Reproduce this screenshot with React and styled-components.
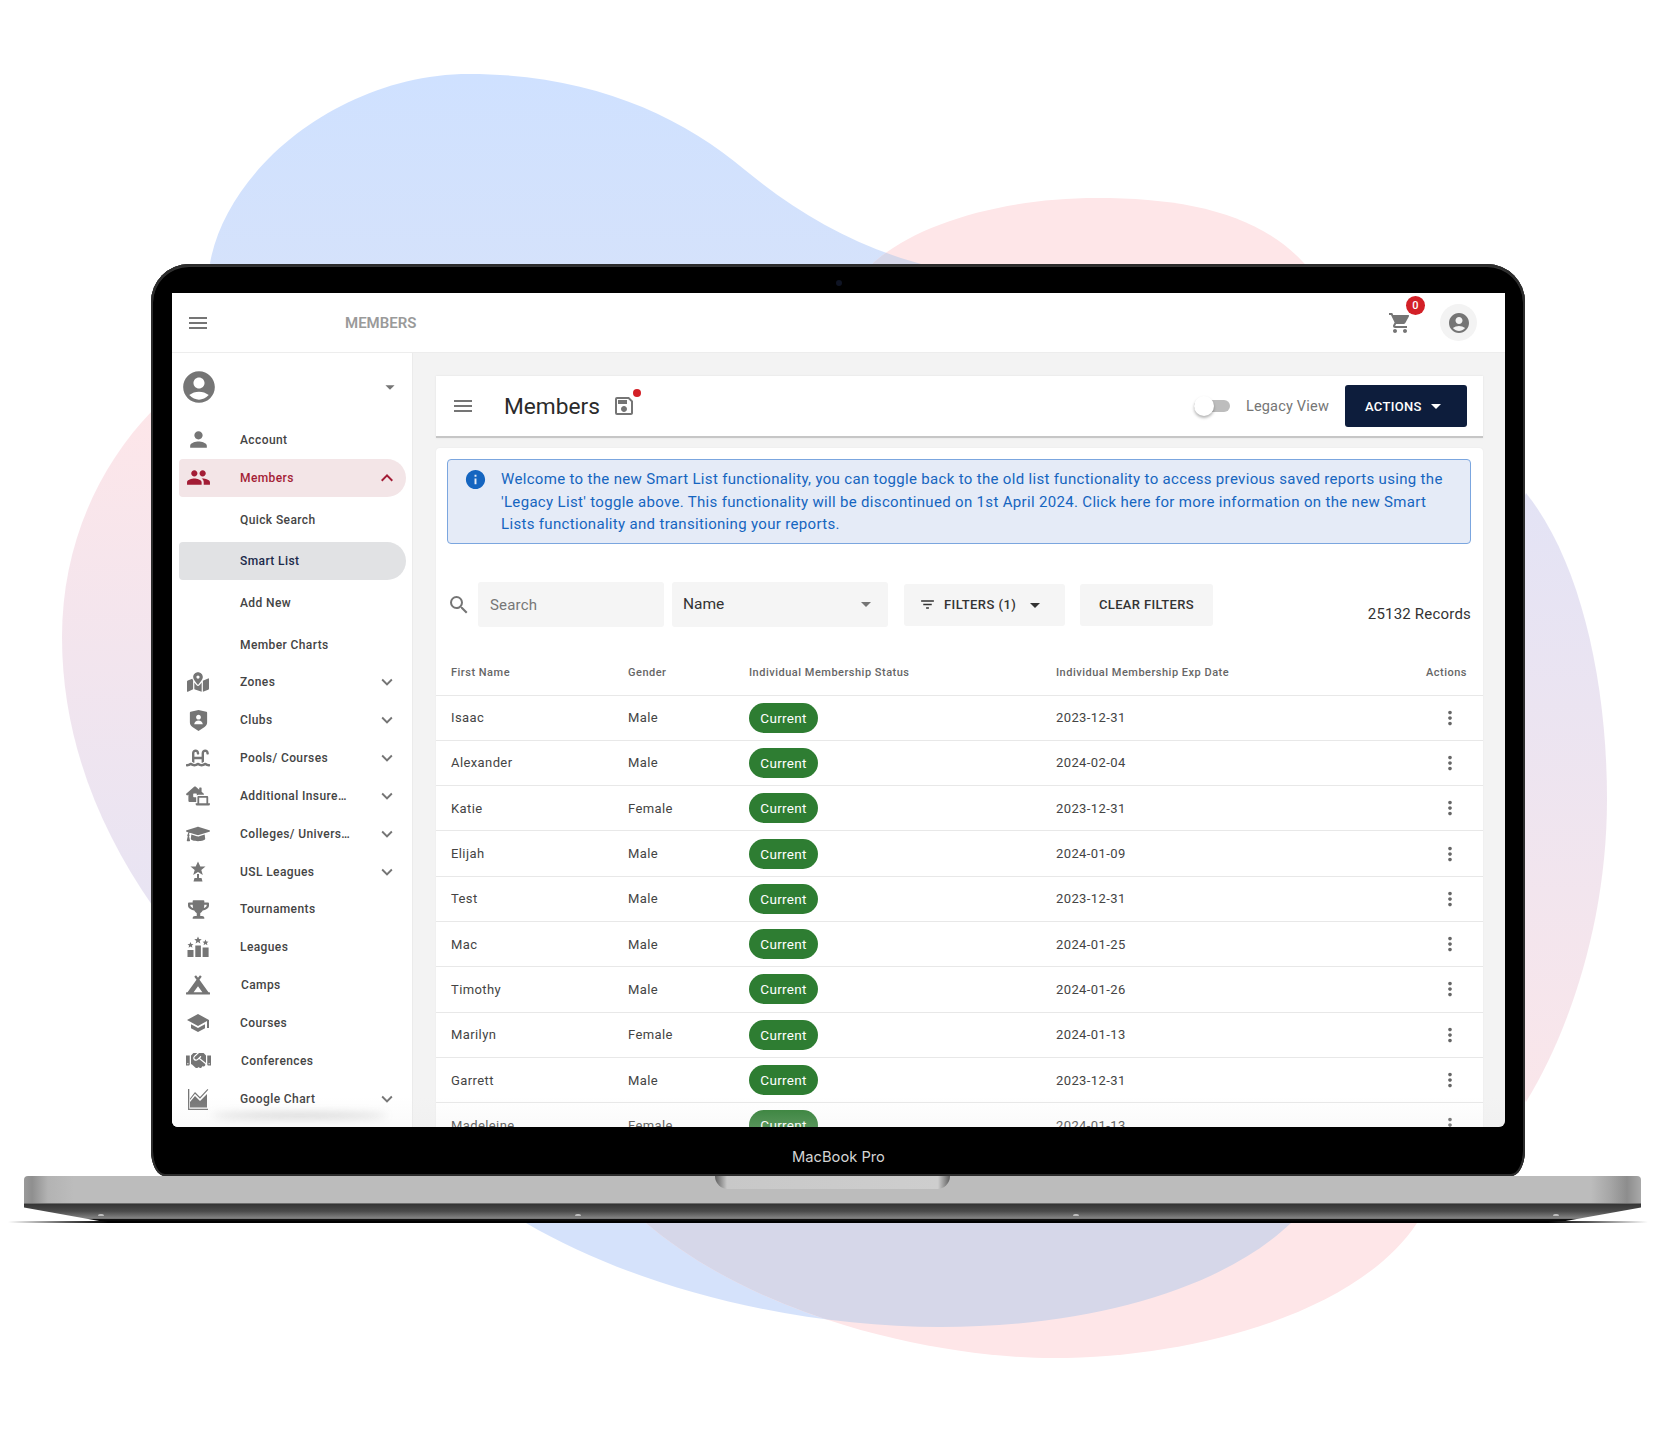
import React from "react";
import styled, { createGlobalStyle } from "styled-components";
import {
    MdMenu,
    MdShoppingCart,
    MdAccountCircle,
    MdPerson,
    MdPeople,
    MdKeyboardArrowDown,
    MdKeyboardArrowUp,
    MdArrowDropDown,
    MdSearch,
    MdFilterList,
    MdMoreVert,
    MdInfo,
    MdOutlineSave,
    MdSchool,
} from "react-icons/md";
import {
    FaMapMarkedAlt,
    FaSwimmingPool,
    FaLaptopHouse,
    FaGraduationCap,
    FaTrophy,
    FaCampground,
    FaHandshake,
} from "react-icons/fa";
import { RiShieldUserFill } from "react-icons/ri";

const UslIcon = () => (
    <svg width="24" height="24" viewBox="0 0 24 24" fill="currentColor">
        <path d="M12 1.5l2.3 5h5.2l-4.2 3.4 1.5 5-4.8-3-4.8 3 1.5-5-4.2-3.4h5.2z" />
        <path d="M11 14h2v4h-2zM8.5 18h7l1 3.5h-9z" />
    </svg>
);

const LeaguesIcon = () => (
    <svg width="24" height="24" viewBox="0 0 24 24" fill="currentColor">
        <path d="M1.5 15h6v7h-6zM9.3 10.5h5.6V22H9.300zM16.600 12.500h6V22h-6z" />
        <path d="M12 1.500l1.100 2.500 2.600.2-2 1.700.7 2.600-2.400-1.400-2.400 1.400.7-2.600-2-1.700 2.600-.2z" />
        <path d="M4.500 7l.9 2 2.100.2-1.600 1.400.5 2.100-1.900-1.100-1.900 1.100.5-2.100-1.600-1.400 2.100-.2z" />
        <path d="M19.500 4.500l.9 2 2.100.2-1.600 1.400.5 2.100-1.900-1.100-1.900 1.100.5-2.100-1.600-1.400 2.100-.2z" />
    </svg>
);

const ChartIcon = () => (
    <svg width="24" height="24" viewBox="0 0 24 24" fill="currentColor">
        <path d="M2 2h1.300v19.700H22V23H2z" />
        <path d="M4 20.500v-5.500l5-6 5 5 7-7v13.500z" />
        <path d="M4 11.500l5-6.500 5 5 7.500-8 .8.800-8.300 9-5-5-5 6.200z" />
    </svg>
);

const MENU = [
    { label: "Zones", icon: <FaMapMarkedAlt size={22} />, arrow: true },
    { label: "Clubs", icon: <RiShieldUserFill size={23} />, arrow: true },
    { label: "Pools/ Courses", icon: <FaSwimmingPool size={24} />, arrow: true },
    { label: "Additional Insure…", icon: <FaLaptopHouse size={24} />, arrow: true },
    { label: "Colleges/ Univers…", icon: <FaGraduationCap size={24} />, arrow: true },
    { label: "USL Leagues", icon: <UslIcon />, arrow: true },
    { label: "Tournaments", icon: <FaTrophy size={21} /> },
    { label: "Leagues", icon: <LeaguesIcon /> },
    { label: "Camps", icon: <FaCampground size={24} />, nudge: 1 },
    { label: "Courses", icon: <MdSchool size={24} /> },
    { label: "Conferences", icon: <FaHandshake size={25} />, nudge: 1 },
    { label: "Google Chart", icon: <ChartIcon />, arrow: true },
];

const SUBMENU = ["Quick Search", "Smart List", "Add New", "Member Charts"];

const MEMBERS = [
    ["Isaac", "Male", "2023-12-31"],
    ["Alexander", "Male", "2024-02-04"],
    ["Katie", "Female", "2023-12-31"],
    ["Elijah", "Male", "2024-01-09"],
    ["Test", "Male", "2023-12-31"],
    ["Mac", "Male", "2024-01-25"],
    ["Timothy", "Male", "2024-01-26"],
    ["Marilyn", "Female", "2024-01-13"],
    ["Garrett", "Male", "2023-12-31"],
    ["Madeleine", "Female", "2024-01-13"],
];

const BLUE_PATH =
    "M210 263C228 165 345 74 469 74C590 74 680 115 745 170C800 215 860 250 937 268L1291 1223C1220 1290 1090 1327 940 1327C800 1327 640 1290 526 1223Z";
const PINK_PATH =
    "M873 263C915 225 1000 198 1097 198C1190 198 1265 215 1310 270L1417 1223C1360 1310 1200 1358 1053 1358C940 1358 760 1320 646 1223Z";
const LEFT_PATH = "M152 411C95 470 62 550 62 637C62 740 100 830 152 905L300 700Z";
const RIGHT_PATH = "M1526 493C1580 560 1607 680 1607 799C1607 920 1570 1030 1526 1102L1400 800Z";

function Blobs() {
    return (
        <BlobLayer viewBox="0 0 1670 1430">
            <defs>
                <linearGradient id="blueFade" x1="0" y1="0" x2="0" y2="1">
                    <stop offset="0" stopColor="#cfe1ff" />
                    <stop offset="0.16" stopColor="#d5e2fb" />
                </linearGradient>
                <linearGradient id="leftFade" x1="0" y1="0" x2="0" y2="1">
                    <stop offset="0" stopColor="#fde6e9" />
                    <stop offset="1" stopColor="#e8e4f3" />
                </linearGradient>
                <linearGradient id="rightFade" x1="0" y1="0" x2="0" y2="1">
                    <stop offset="0" stopColor="#e3e3f5" />
                    <stop offset="1" stopColor="#fae6ea" />
                </linearGradient>
                <clipPath id="blueClip">
                    <path d={BLUE_PATH} />
                </clipPath>
            </defs>
            <path d={LEFT_PATH} fill="url(#leftFade)" />
            <path d={RIGHT_PATH} fill="url(#rightFade)" />
            <path d={BLUE_PATH} fill="url(#blueFade)" />
            <path d={PINK_PATH} fill="#fee6e8" />
            <path d={PINK_PATH} fill="#d6d7e9" clipPath="url(#blueClip)" />
        </BlobLayer>
    );
}

function Sidebar() {
    return (
        <SideColumn>
            <ProfileRow>
                <MdAccountCircle size={38} />
                <MdArrowDropDown size={22} />
            </ProfileRow>
            <MenuItem>
                <MenuIcon>
                    <MdPerson size={25} />
                </MenuIcon>
                <MenuLabel>Account</MenuLabel>
            </MenuItem>
            <MenuItem $open>
                <MenuIcon>
                    <MdPeople size={25} />
                </MenuIcon>
                <MenuLabel $open>Members</MenuLabel>
                <ArrowSlot>
                    <MdKeyboardArrowUp size={24} />
                </ArrowSlot>
            </MenuItem>
            <SubList>
                {SUBMENU.map((item) => (
                    <SubItem key={item}>
                        <SubPill $active={item === "Smart List"}>{item}</SubPill>
                    </SubItem>
                ))}
            </SubList>
            {MENU.map((item) => (
                <MenuItem key={item.label}>
                    <MenuIcon>{item.icon}</MenuIcon>
                    <MenuLabel $nudge={item.nudge}>{item.label}</MenuLabel>
                    {item.arrow && (
                        <ArrowSlot>
                            <MdKeyboardArrowDown size={22} />
                        </ArrowSlot>
                    )}
                </MenuItem>
            ))}
        </SideColumn>
    );
}

function MembersTable() {
    return (
        <Table>
            <HeadRow>
                <span>First Name</span>
                <span>Gender</span>
                <span>Individual Membership Status</span>
                <span>Individual Membership Exp Date</span>
                <ActionsHead>Actions</ActionsHead>
            </HeadRow>
            {MEMBERS.map((m) => (
                <BodyRow key={m[0]}>
                    <span>{m[0]}</span>
                    <span>{m[1]}</span>
                    <span>
                        <StatusPill>Current</StatusPill>
                    </span>
                    <span>{m[2]}</span>
                    <Kebab>
                        <MdMoreVert size={22} />
                    </Kebab>
                </BodyRow>
            ))}
        </Table>
    );
}

function Content() {
    return (
        <Main>
            <HeaderCard>
                <HeaderMenu>
                    <MdMenu size={24} />
                </HeaderMenu>
                <PageTitle>Members</PageTitle>
                <SaveWrap>
                    <MdOutlineSave size={24} />
                    <SaveDot />
                </SaveWrap>
                <HeaderSpacer />
                <Toggle>
                    <ToggleThumb />
                </Toggle>
                <ToggleLabel>Legacy View</ToggleLabel>
                <ActionsButton>
                    ACTIONS
                    <MdArrowDropDown size={24} />
                </ActionsButton>
            </HeaderCard>
            <ListCard>
                <Alert>
                    <AlertIcon>
                        <MdInfo size={23} />
                    </AlertIcon>
                    <AlertText>
                        Welcome to the new Smart List functionality, you can toggle back to the old list
                        functionality to access previous saved reports using the 'Legacy List' toggle above.
                        This functionality will be discontinued on 1st April 2024. Click here for more
                        information on the new Smart Lists functionality and transitioning your reports.
                    </AlertText>
                </Alert>
                <Toolbar>
                    <SearchIcon>
                        <MdSearch size={24} />
                    </SearchIcon>
                    <SearchField>Search</SearchField>
                    <SelectField>
                        Name
                        <MdArrowDropDown size={24} />
                    </SelectField>
                    <FilterButton>
                        <MdFilterList size={17} />
                        <span>FILTERS (1)</span>
                        <MdArrowDropDown size={24} />
                    </FilterButton>
                    <ClearButton>CLEAR FILTERS</ClearButton>
                    <Records>25132 Records</Records>
                </Toolbar>
                <MembersTable />
            </ListCard>
        </Main>
    );
}

export default function App() {
    return (
        <>
            <GlobalStyle />
            <Page>
                <Blobs />
                <Lid>
                    <TopBezel>
                        <Camera />
                    </TopBezel>
                    <Screen>
                        <TopBar>
                            <TopMenu>
                                <MdMenu size={24} />
                            </TopMenu>
                            <TopTitle>MEMBERS</TopTitle>
                            <Cart>
                                <MdShoppingCart size={24} />
                                <CartBadge>0</CartBadge>
                            </Cart>
                            <AvatarButton>
                                <MdAccountCircle size={24} />
                            </AvatarButton>
                        </TopBar>
                        <Body>
                            <Sidebar />
                            <Content />
                        </Body>
                        <BottomFade />
                    </Screen>
                    <Chin>MacBook Pro</Chin>
                </Lid>
                <Base>
                    <SilverStrip>
                        <Notch />
                    </SilverStrip>
                    <DarkStrip>
                        <Foot $left={74} />
                        <Foot $left={471} />
                        <Foot $left={492} />
                        <Foot $left={474} />
                    </DarkStrip>
                </Base>
                <GroundLine />
            </Page>
        </>
    );
}

const GlobalStyle = createGlobalStyle`
    html, body {
        margin: 0;
        padding: 0;
        background: #fff;
    }
    * {
        box-sizing: border-box;
    }
`;
const Page = styled.div`
    position: relative;
    width: 1670px;
    height: 1430px;
    padding-top: 264px;
    overflow: hidden;
    background: #fff;
    font-family: Roboto, "Liberation Sans", sans-serif;
`;
const BlobLayer = styled.svg`
    position: absolute;
    left: 0;
    top: 0;
    width: 1670px;
    height: 1430px;
`;
const Lid = styled.div`
    position: relative;
    width: 1374px;
    height: 912px;
    margin-left: 151px;
    padding: 0 20px 0 21px;
    background: #000;
    border-radius: 38px 38px 14px 14px / 38px 38px 26px 26px;
    box-shadow: inset 0 0 0 2px #2c2c2c, inset 0 1px 0 2px #333;
    display: flex;
    flex-direction: column;
`;
const TopBezel = styled.div`
    height: 29px;
    flex: none;
    display: flex;
    align-items: center;
    justify-content: center;
    padding-top: 8px;
`;
const Camera = styled.div`
    width: 6px;
    height: 6px;
    border-radius: 50%;
    background: #0f1424;
`;
const Screen = styled.div`
    position: relative;
    height: 834px;
    flex: none;
    background: #f3f3f3;
    overflow: hidden;
    border-radius: 0 0 6px 6px;
    display: flex;
    flex-direction: column;
`;
const Chin = styled.div`
    flex: 1;
    display: flex;
    align-items: center;
    justify-content: center;
    font-family: Inter, sans-serif;
    font-size: 14.7px;
    color: #d4d4d4;
    padding-top: 10px;
`;
const BottomFade = styled.div`
    position: absolute;
    left: 0;
    right: 0;
    bottom: 0;
    height: 30px;
    background: linear-gradient(to bottom, rgba(240, 240, 240, 0), rgba(232, 232, 232, 0.22));
    pointer-events: none;

    &::after {
        content: "";
        position: absolute;
        left: 40px;
        width: 175px;
        bottom: 9px;
        height: 5px;
        border-radius: 50%;
        background: rgba(90, 90, 90, 0.3);
        filter: blur(4px);
    }
`;
const Base = styled.div`
    position: relative;
    width: 1617px;
    margin-left: 24px;
`;
const SilverStrip = styled.div`
    height: 28px;
    display: flex;
    justify-content: center;
    border-radius: 4px 4px 0 0;
    background: linear-gradient(
        to right,
        #9a9a9a 0,
        #8f8f8f 8px,
        #b3b3b3 24px,
        #bcbcbc 50px,
        #bcbcbc calc(100% - 50px),
        #a5a5a5 calc(100% - 30px),
        #8d8d8d calc(100% - 14px),
        #a9a9a9 100%
    );
    border-bottom: 1px solid #6d6d6d;
`;
const Notch = styled.div`
    width: 235px;
    height: 13px;
    border-radius: 0 0 14px 14px;
    background: linear-gradient(to right, #5e5e5e 0, #c8c8c8 12px, #cecece calc(100% - 12px), #5e5e5e 100%);
`;
const DarkStrip = styled.div`
    height: 18px;
    display: flex;
    align-items: flex-end;
    padding-bottom: 6px;
    background: linear-gradient(to bottom, #343434 0, #4b4b4b 40%, #858585 80%, #111 84%, #000 100%);
    clip-path: polygon(0 0, 100% 0, 100% 20%, 95% 100%, 5% 100%, 0 20%);
`;
const Foot = styled.div`
    width: 6px;
    height: 2px;
    margin-left: ${(p) => p.$left}px;
    border-radius: 2px 2px 0 0;
    background: #bdbdbd;
`;
const GroundLine = styled.div`
    position: absolute;
    left: 8px;
    top: 1221px;
    width: 1640px;
    height: 2px;
    background: linear-gradient(
        to right,
        rgba(0, 0, 0, 0),
        #555 60px,
        #000 100px,
        #000 calc(100% - 100px),
        #555 calc(100% - 60px),
        rgba(0, 0, 0, 0)
    );
`;

/* top bar */
const TopBar = styled.div`
    height: 60px;
    flex: none;
    display: flex;
    align-items: center;
    background: #fff;
    border-bottom: 1px solid #ededed;
    color: #757575;
`;
const TopMenu = styled.div`
    width: 173px;
    padding-left: 14px;
    display: flex;
`;
const TopTitle = styled.div`
    flex: 1;
    font-size: 15px;
    font-weight: 600;
    color: #9a9a9a;
`;
const Cart = styled.div`
    position: relative;
    display: flex;
    margin-right: 28px;
`;
const CartBadge = styled.div`
    position: absolute;
    left: 18px;
    top: -15px;
    width: 19px;
    height: 19px;
    border-radius: 50%;
    background: #d32027;
    color: #fff;
    font-size: 11px;
    font-weight: 500;
    display: flex;
    align-items: center;
    justify-content: center;
`;
const AvatarButton = styled.div`
    width: 37px;
    height: 37px;
    margin-right: 28px;
    border-radius: 50%;
    background: #f3f3f3;
    display: flex;
    align-items: center;
    justify-content: center;
`;
const Body = styled.div`
    flex: 1;
    min-height: 0;
    display: flex;
`;

/* sidebar */
const SideColumn = styled.div`
    width: 241px;
    flex: none;
    background: #fff;
    border-right: 1px solid #ebebeb;
    overflow: hidden;
    color: #757575;
`;
const ProfileRow = styled.div`
    height: 68px;
    display: flex;
    align-items: center;
    justify-content: space-between;
    padding: 0 11px 0 8px;
`;
const MenuItem = styled.div`
    height: 37.85px;
    width: 227px;
    margin-left: 7px;
    display: flex;
    align-items: center;
    border-radius: 4px 19px 19px 4px;
    background: ${(p) => (p.$open ? "#f3e5e7" : "transparent")};
    color: ${(p) => (p.$open ? "#a31d36" : "#757575")};
`;
const MenuIcon = styled.div`
    width: 61px;
    padding-right: 23px;
    flex: none;
    display: flex;
    justify-content: center;
`;
const MenuLabel = styled.div`
    flex: 1;
    font-size: 12px;
    font-weight: 500;
    letter-spacing: 0.4px;
    white-space: nowrap;
    color: ${(p) => (p.$open ? "#a31d36" : "#444")};
    padding-left: ${(p) => p.$nudge || 0}px;
`;
const ArrowSlot = styled.div`
    width: 32px;
    flex: none;
    display: flex;
    margin-right: 3px;
    justify-content: center;
`;
const SubList = styled.div`
    padding-top: 2px;
    margin-bottom: -2px;
`;
const SubItem = styled.div`
    height: 41.7px;
    display: flex;
    align-items: center;
`;
const SubPill = styled.div`
    width: 227px;
    height: 37.500px;
    margin-left: 7px;
    padding-left: 61px;
    display: flex;
    align-items: center;
    border-radius: 4px 19px 19px 4px;
    font-size: 12px;
    font-weight: 500;
    letter-spacing: 0.4px;
    background: ${(p) => (p.$active ? "#e1e2e4" : "transparent")};
    color: ${(p) => (p.$active ? "#1b2a4a" : "#444")};
`;

/* main area */
const Main = styled.div`
    flex: 1;
    min-width: 0;
    padding: 23px 22px 0 23px;
`;
const HeaderCard = styled.div`
    height: 62px;
    display: flex;
    align-items: center;
    padding: 0 16px 0 15px;
    background: #fff;
    border-bottom: 2px solid #c6c6c6;
    box-shadow: 0 0 2px rgba(0, 0, 0, 0.08);
`;
const HeaderMenu = styled.div`
    display: flex;
    color: #757575;
    margin-right: 29px;
`;
const PageTitle = styled.div`
    font-size: 22.7px;
    color: #2b2b2b;
`;
const SaveWrap = styled.div`
    position: relative;
    display: flex;
    margin-left: 12px;
    color: #757575;
`;
const SaveDot = styled.div`
    position: absolute;
    right: -5px;
    top: -5px;
    width: 8px;
    height: 8px;
    border-radius: 50%;
    background: #d32027;
`;
const HeaderSpacer = styled.div`
    flex: 1;
`;
const Toggle = styled.div`
    position: relative;
    width: 36px;
    height: 12px;
    border-radius: 7px;
    background: #bdbdbd;
`;
const ToggleThumb = styled.div`
    position: absolute;
    left: 0;
    top: -4px;
    width: 20px;
    height: 20px;
    border-radius: 50%;
    background: #fff;
    box-shadow: 0 2px 3px rgba(0, 0, 0, 0.3);
`;
const ToggleLabel = styled.div`
    margin: 0 16px;
    font-size: 14.500px;
    letter-spacing: 0.2px;
    color: #757575;
`;
const ActionsButton = styled.div`
    width: 122px;
    height: 41.500px;
    display: flex;
    align-items: center;
    gap: 2px;
    padding-left: 20px;
    border-radius: 3px;
    background: #0d1d3c;
    color: #fff;
    font-size: 13px;
    font-weight: 500;
    letter-spacing: 0.3px;
`;
const ListCard = styled.div`
    margin-top: 10px;
    padding: 11px 12px 0 0;
    background: #fff;
    border-radius: 4px 4px 0 0;
    box-shadow: 0 0 2px rgba(0, 0, 0, 0.06);
`;
const Alert = styled.div`
    height: 85px;
    margin-left: 11px;
    display: flex;
    align-items: flex-start;
    padding: 8px 20px 0 16px;
    border: 1px solid #7ba6df;
    border-radius: 4px;
    background: #e5ebf7;
    color: #1565c0;
`;
const AlertIcon = styled.div`
    display: flex;
    flex: none;
    width: 37px;
`;
const AlertText = styled.div`
    font-size: 15px;
    line-height: 22.7px;
    letter-spacing: 0.325px;
`;
const Toolbar = styled.div`
    height: 45px;
    margin-top: 38px;
    display: flex;
    align-items: center;
    padding-left: 11px;
`;
const SearchIcon = styled.div`
    width: 31px;
    display: flex;
    color: #757575;
`;
const SearchField = styled.div`
    width: 186px;
    height: 45px;
    display: flex;
    align-items: center;
    padding: 1px 0 0 12px;
    border-radius: 3px;
    background: #f5f5f5;
    font-size: 15px;
    letter-spacing: 0.2px;
    color: #777;
`;
const SelectField = styled.div`
    width: 216px;
    height: 45px;
    margin-left: 8px;
    display: flex;
    align-items: center;
    justify-content: space-between;
    padding: 0 10px 2px 11px;
    border-radius: 3px;
    background: #f5f5f5;
    font-size: 15.500px;
    color: #333;

    svg {
        color: #757575;
    }
`;
const FilterButton = styled.div`
    width: 161px;
    height: 42px;
    margin-left: 16px;
    display: flex;
    align-items: center;
    padding-left: 15px;
    border-radius: 3px;
    background: #f5f5f5;
    font-size: 13px;
    font-weight: 500;
    letter-spacing: 0.45px;
    color: #333;

    span {
        margin: 0 7px 0 8px;
    }
`;
const ClearButton = styled.div`
    width: 133px;
    height: 42px;
    margin-left: 15px;
    display: flex;
    align-items: center;
    justify-content: center;
    border-radius: 3px;
    background: #f5f5f5;
    font-size: 13px;
    font-weight: 500;
    letter-spacing: 0.35px;
    color: #333;
`;
const Records = styled.div`
    margin-left: auto;
    align-self: flex-end;
    padding-bottom: 4px;
    font-size: 15px;
    letter-spacing: 0.2px;
    color: #333;
`;
const Table = styled.div`
    margin-top: 22.5px;
    margin-right: -12px;
`;
const rowColumns = "177px 121px 307px 1fr 60px";
const HeadRow = styled.div`
    height: 46px;
    display: grid;
    grid-template-columns: ${rowColumns};
    align-items: center;
    padding: 0 16px 0 15px;
    border-bottom: 1px solid #e8e8e8;
    font-size: 11px;
    font-weight: 500;
    letter-spacing: 0.5px;
    color: #666;
`;
const ActionsHead = styled.span`
    text-align: right;
`;
const BodyRow = styled.div`
    height: 45.3px;
    display: grid;
    grid-template-columns: ${rowColumns};
    align-items: center;
    padding: 0 16px 0 15px;
    border-bottom: 1px solid #e8e8e8;
    font-size: 13px;
    letter-spacing: 0.4px;
    color: #444;
`;
const StatusPill = styled.div`
    width: 69px;
    height: 30px;
    display: flex;
    align-items: center;
    justify-content: center;
    border-radius: 15px;
    background: #2e7d32;
    color: #fff;
    font-size: 13.500px;
    letter-spacing: 0.3px;
`;
const Kebab = styled.div`
    display: flex;
    justify-content: flex-end;
    padding-right: 6px;
    color: #666;
`;
